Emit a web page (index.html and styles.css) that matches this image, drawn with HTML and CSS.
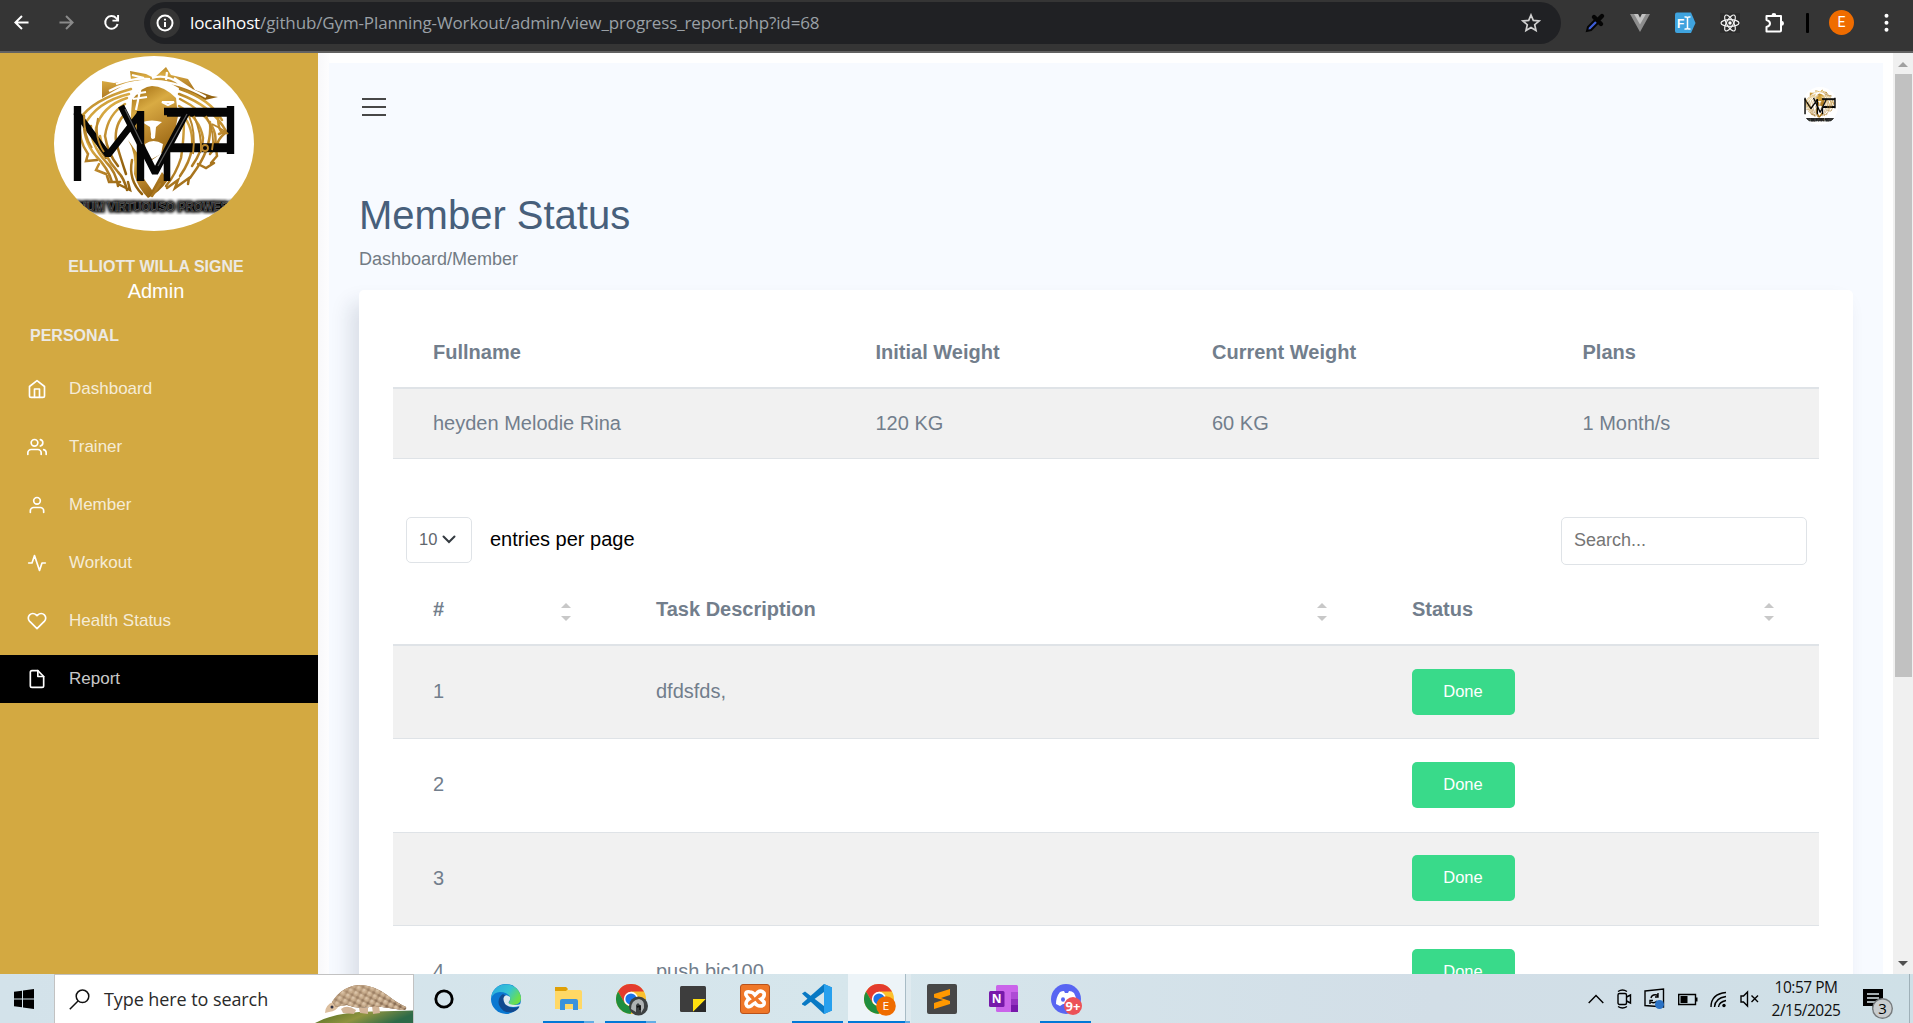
FILE: index.html
```html
<!DOCTYPE html>
<html lang="en">
<head>
<meta charset="utf-8">
<title>Member Status</title>
<link rel="stylesheet" href="styles.css">
</head>
<body>
<svg class="defs" width="0" height="0">
  <defs>
    <linearGradient id="gold" x1="0.2" y1="0" x2="0.6" y2="1">
      <stop offset="0" stop-color="#a87418"/><stop offset=".3" stop-color="#d9ab43"/><stop offset=".65" stop-color="#b8842a"/><stop offset="1" stop-color="#94620f"/>
    </linearGradient>
    <linearGradient id="hill" x1="0" y1="0" x2="1" y2=".3"><stop offset="0" stop-color="#4d6a1e"/><stop offset=".55" stop-color="#8f9440"/><stop offset="1" stop-color="#2c6a48"/></linearGradient>
    <linearGradient id="edgeTop" x1="0" y1="0" x2="1" y2=".5"><stop offset="0" stop-color="#2aa7e0"/><stop offset=".6" stop-color="#35c4d4"/><stop offset="1" stop-color="#6be04c"/></linearGradient>
    <linearGradient id="hide" x1="0" y1="0" x2="1" y2="1"><stop offset="0" stop-color="#b59778"/><stop offset="1" stop-color="#7d624b"/></linearGradient>
    <pattern id="scales" width="6" height="6" patternUnits="userSpaceOnUse" patternTransform="rotate(28)"><circle cx="3" cy="3" r="2.800" fill="#c9ad8d"/><circle cx="2.400" cy="2.400" r="1.300" fill="#dcc5aa"/></pattern>
    <filter id="soft"><feGaussianBlur stdDeviation="1.500"/></filter>
    <symbol id="lion" viewBox="0 0 200 175" preserveAspectRatio="none">
      <rect width="200" height="175" fill="#fff"/>
      <g fill="url(#gold)">
        <path d="M78 44 Q88 30 98 30 Q110 30 122 42 L124 60 L120 80 L112 94 L98 104 L86 92 L76 74Z"/>
        <path d="M48 42L48 25L60 27L77 24L76 15L92 18L100 22L112 11L117 19L134 23L141 34L158 40L164 41L151 44L132 36L112 25L92 23L72 28L58 36Z"/>
        <path d="M74 84Q82 96 80 118Q84 132 94 142Q106 136 114 124L108 116L98 134L88 120L84 98Z"/>
      </g>
      <g fill="none" stroke="#fff" stroke-width="2.200">
        <path d="M55 35Q78 23 97 25.500Q122 24 152 41M62 28Q82 21 96 23M98 22Q112 17 128 29M80 38L92 36M79 43L93 41M87 30L82 54M108 46L120 46L114 49ZM78 19L90 22M113 16L112 24M120 22L138 34"/>
      </g>
      <g fill="none" stroke="url(#gold)" stroke-width="2.500" stroke-linecap="round">
        <path d="M77 33Q38 44 26 63M75 38Q42 46 30 70M73 42Q48 50 42 72Q40 88 52 102M71 48Q54 58 51 80Q54 98 64 110M72 57Q60 68 62 86Q66 100 72 118M26 65Q24 84 34 98L32 105L43 104"/>
        <path d="M30 60Q28 84 42 100Q54 112 58 126M37 70Q36 88 52 106Q62 116 64 130M46 80Q48 98 64 116Q70 122 73 134M45 108L42 114L52 118M53 120L55 126L66 126M64 128L76 134L74 126M78 104Q74 124 88 138"/>
        <path d="M126 33Q156 43 168 64M125 38Q158 50 172 75L165 78M126 43Q148 54 158 70Q166 86 156 98M125 50Q146 62 149 82Q149 94 138 110M128 58Q140 72 138 92Q136 106 126 120M130 62Q130 84 127 102Q122 118 112 130M164 60Q164 80 173 76Q160 84 163 100L157 107M156 66Q158 90 143 112L136 122M113 132L124 124L121 132L135 122L134 128M106 128L98 140M144 108L152 112L160 107"/>
      </g>
      <path d="M88 66Q98 63 108 66L102 71L101 82Q96 85 97 78L96 71Z M91 88Q99 82 109 88L107 98L98 103L92 98Z" fill="#fff"/>
      <g fill="none" stroke="#050505">
        <path d="M23.500 50V125M86.500 55V125M110 55.500H180M176.500 50V98M114 92.500H180" stroke-width="7.400"/>
        <path d="M22 56L54 99L86 58M67 50L101 117L134 54M113 94V125" stroke-width="6.600" stroke-linejoin="bevel"/>
        <path d="M113 58.500H174M118 89.500H174" stroke-width="4.600"/>
      </g>
      <path d="M104 110L133 58M71 53L88 88" stroke="#555" stroke-width="1.300"/>
      <g fill="none" stroke="#b9862b" stroke-width="1.900"><path d="M30 60Q30 80 38 92M44 62Q40 82 50 96M140 60Q148 78 147 96M152 60Q162 78 158 94M158 68Q170 74 174 78M135 60Q142 76 139 98"/><circle cx="151" cy="92" r="3"/></g>
      <text x="20" y="154.500" textLength="162" lengthAdjust="spacingAndGlyphs" class="motto motto-shade" filter="url(#soft)">IMUM VIRTUOUSO PROWESS</text>
      <text x="20" y="154.500" textLength="162" lengthAdjust="spacingAndGlyphs" class="motto">IMUM VIRTUOUSO PROWESS</text>
    </symbol>
    <symbol id="chrome" viewBox="0 0 30 30">
      <circle cx="15" cy="15" r="15" fill="#fbc02d"/>
      <path d="M2 7.500A15 15 0 0 1 28 7.500H15L8.500 18.800Z" fill="#e33b2e"/>
      <path d="M2 7.500L9 19.500Q12 23 18 22L14.500 30A15 15 0 0 1 2 7.500" fill="#1e8e3e"/>
      <circle cx="15" cy="15" r="7.200" fill="#fff"/><circle cx="15" cy="15" r="5.600" fill="#1a73e8"/>
    </symbol>
  </defs>
</svg>

<header class="browser">
  <svg class="nav-btn" viewBox="0 0 16 16"><path d="M15.500 8H1.500M8.500 1L1.500 8L8.500 15"/></svg>
  <svg class="nav-btn dim" viewBox="0 0 16 16"><path d="M.5 8H14.500M7.500 1L14.500 8L7.500 15"/></svg>
  <svg class="nav-btn" viewBox="0 0 16 16"><path d="M14.500 9.500A6.700 6.700 0 1 1 13 3.400L15 5.500M15 0V6H9"/></svg>
  <div class="omnibox">
    <span class="site-info"><svg width="18" height="18" viewBox="0 0 18 18"><circle cx="9" cy="9" r="7.500"/><path d="M9 8V13M9 4.800V6.500"/></svg></span>
    <span class="url"><b>localhost</b>/github/Gym-Planning-Workout/admin/view_progress_report.php?id=68</span>
    <svg class="star" width="20" height="20" viewBox="0 0 20 20"><path d="M10 2L12.300 7.400L18.100 7.900L13.700 11.700L15 17.400L10 14.400L5 17.400L6.300 11.700L1.900 7.900L7.700 7.400Z"/></svg>
  </div>
  <div class="extensions">
    <span><svg width="22" height="22" viewBox="0 0 22 22"><path d="M3 19L4 15L12 7L15 10L7 18Z" fill="#3f5fd8" stroke="#050505" stroke-width="2"/><path d="M10 5L17 12M13.500 8.500L18 4" stroke="#050505" stroke-width="4.400" stroke-linecap="round"/></svg></span>
    <span><svg width="20" height="18" viewBox="0 0 20 18"><path d="M0 0H8L10 4L12 0H20L10 18Z" fill="#8d8d8d"/><path d="M4 0H8L10 4L12 0H16L10 10.500Z" fill="#c2c2c2"/></svg></span>
    <span><svg width="22" height="22" viewBox="0 0 22 22"><path d="M3 .5H17L21.500 11L17 21H3Q1 21 1 19V2.500Q1 .5 3 .5" fill="#3fa3de"/><text x="3" y="16" class="fi">F</text><path d="M10.500 5Q13.500 4.500 13.500 6.500V15.500Q13.500 17.500 10.500 17M16.500 5Q13.500 4.500 13.500 6.500M13.500 15.500Q13.500 17.500 16.500 17" fill="none" stroke="#fff" stroke-width="1.500"/></svg></span>
    <span><svg width="20" height="20" viewBox="0 0 20 20"><rect width="20" height="20" fill="#2c2c2c"/><g fill="none" stroke="#f2f2f2" stroke-width="1.200"><ellipse cx="10" cy="10" rx="9" ry="3.400"/><ellipse cx="10" cy="10" rx="9" ry="3.400" transform="rotate(60 10 10)"/><ellipse cx="10" cy="10" rx="9" ry="3.400" transform="rotate(120 10 10)"/></g><circle cx="10" cy="10" r="1.700" fill="#fff"/></svg></span>
    <span><svg width="22" height="22" viewBox="0 0 22 22"><path d="M2.500 4H17V18.500Q17 19.500 16 19.500H2.500V15Q6 14 6 11.500Q6 9 2.500 8Z" fill="none" stroke="#fff" stroke-width="2" stroke-linejoin="round"/><path d="M7.500 3.500A2.400 2.400 0 0 1 12.300 3.500ZM17.500 8.800A2.500 2.500 0 0 1 17.500 13.800Z" fill="#fff"/></svg></span>
  </div>
  <i class="divider"></i>
  <span class="profile">E</span>
  <svg class="menu-dots" width="5" height="20" viewBox="0 0 5 20"><circle cx="2.500" cy="2.700" r="2"/><circle cx="2.500" cy="9.700" r="2"/><circle cx="2.500" cy="16.700" r="2"/></svg>
</header>

<div class="viewport">
  <aside class="sidebar">
    <svg class="logo" width="200" height="175"><use href="#lion" width="200" height="175"/></svg>
    <div class="user-name">ELLIOTT WILLA SIGNE</div>
    <div class="user-role">Admin</div>
    <div class="nav-title">PERSONAL</div>
    <nav>
      <a><svg viewBox="0 0 24 24"><path d="M3 9l9-7 9 7v11a2 2 0 0 1-2 2H5a2 2 0 0 1-2-2z"/><path d="M9 22V12h6v10"/></svg><span>Dashboard</span></a>
      <a><svg viewBox="0 0 24 24"><path d="M17 21v-2a4 4 0 0 0-4-4H5a4 4 0 0 0-4 4v2"/><circle cx="9" cy="7" r="4"/><path d="M23 21v-2a4 4 0 0 0-3-3.870M16 3.130a4 4 0 0 1 0 7.750"/></svg><span>Trainer</span></a>
      <a><svg viewBox="0 0 24 24"><path d="M20 21v-2a4 4 0 0 0-4-4H8a4 4 0 0 0-4 4v2"/><circle cx="12" cy="7" r="4"/></svg><span>Member</span></a>
      <a><svg viewBox="0 0 24 24"><path d="M22 12h-4l-3 9L9 3l-3 9H2"/></svg><span>Workout</span></a>
      <a><svg viewBox="0 0 24 24"><path d="M20.840 4.610a5.500 5.500 0 0 0-7.780 0L12 5.670l-1.060-1.060a5.500 5.500 0 0 0-7.780 7.780l1.060 1.060L12 21.230l7.780-7.780 1.060-1.060a5.500 5.500 0 0 0 0-7.780z"/></svg><span>Health Status</span></a>
      <a class="active"><svg viewBox="0 0 24 24"><path d="M13 2H6a2 2 0 0 0-2 2v16a2 2 0 0 0 2 2h12a2 2 0 0 0 2-2V9z"/><path d="M13 2v7h7"/></svg><span>Report</span></a>
    </nav>
  </aside>

  <main class="page">
    <div class="content">
      <div class="topbar">
        <div class="burger"><i></i><i></i><i></i></div>
        <svg class="avatar" width="36" height="38" viewBox="8 0 184 175" preserveAspectRatio="none"><use href="#lion" width="200" height="175"/></svg>
      </div>
      <h1>Member Status</h1>
      <div class="crumbs">Dashboard/Member</div>
      <section class="card">
        <table class="summary">
          <colgroup><col style="width:442.500px"><col style="width:336.500px"><col style="width:370.500px"><col></colgroup>
          <thead><tr><th>Fullname</th><th>Initial Weight</th><th>Current Weight</th><th>Plans</th></tr></thead>
          <tbody><tr><td>heyden Melodie Rina</td><td>120 KG</td><td>60 KG</td><td>1 Month/s</td></tr></tbody>
        </table>
        <div class="controls">
          <div class="select">10<svg width="14" height="9" viewBox="0 0 14 9"><path d="M1.500 1.500L7 7L12.500 1.500"/></svg></div>
          <span class="per-page">entries per page</span>
          <div class="search">Search...</div>
        </div>
        <table class="tasks">
          <colgroup><col style="width:223px"><col style="width:756px"><col></colgroup>
          <thead><tr>
            <th><div class="sortable">#<i class="sort"></i></div></th>
            <th><div class="sortable">Task Description<i class="sort"></i></div></th>
            <th><div class="sortable">Status<i class="sort"></i></div></th>
          </tr></thead>
          <tbody>
            <tr><td>1</td><td>dfdsfds,</td><td><span class="btn">Done</span></td></tr>
            <tr><td>2</td><td></td><td><span class="btn">Done</span></td></tr>
            <tr><td>3</td><td></td><td><span class="btn">Done</span></td></tr>
            <tr><td>4</td><td>push bic100</td><td><span class="btn">Done</span></td></tr>
          </tbody>
        </table>
      </section>
    </div>
  </main>
  <div class="scrollbar"><i class="arrow up"></i><i class="thumb"></i><i class="arrow down"></i></div>
</div>

<footer class="taskbar">
  <div class="start"><svg width="20" height="20" viewBox="0 0 20 20"><path d="M0 2.800L8 1.700V9.400H0ZM9 1.500L20 0V9.400H9ZM0 10.400H8V18.200L0 17.200ZM9 10.400H20V20L9 18.400Z"/></svg></div>
  <div class="find">
    <svg width="21" height="21" viewBox="0 0 21 21"><circle cx="13.500" cy="7.300" r="6.300"/><path d="M9 12L.8 20.200"/></svg>
    <span>Type here to search</span>
    <svg class="pangolin" width="98" height="48" viewBox="0 0 98 48">
      <path d="M0 48Q22 36 60 36.500L98 35.500V48Z" fill="url(#hill)"/>
      <path d="M26 34Q32 29 41 35L39 39L28 38ZM44 33H53L53 39L45 38ZM57 31L64 31L65 38L58 39Z" fill="#d3b598"/>
      <path d="M10 38Q10 30 18 27L24 30Q22 36 14 37Z" fill="#dcbf9f"/>
      <path id="shell" d="M17 27Q28 10 46 10Q60 11 72 20Q82 28 91 32Q92 35 88 35Q74 33 60 31Q44 35 32 30Q24 31 21 32Z" fill="url(#hide)"/>
      <use href="#shell"/>
      <path d="M17 27Q28 10 46 10Q60 11 72 20Q82 28 91 32Q92 35 88 35Q74 33 60 31Q44 35 32 30Q24 31 21 32Z" fill="url(#scales)"/>
      <circle cx="17" cy="32" r="1.500" fill="#334"/>
    </svg>
  </div>
  <div class="apps">
    <div class="app"><svg viewBox="0 0 30 30"><circle cx="15" cy="15" r="8.200" fill="none" stroke="#000" stroke-width="2.800"/></svg></div>
    <div class="app"><svg viewBox="0 0 30 30"><circle cx="15" cy="15" r="15" fill="#0b78d1"/><path d="M1 10A15 15 0 0 1 30 14Q30 21 22 21Q18 21 17 19Q20 17 19 13Q16 8 9 8Q3 8 0 14Z" fill="url(#edgeTop)"/><path d="M12 10Q6 14 8 21Q12 30 22 28Q27 26 28.500 22.500Q20 26 15 20Q12 16 15 12Z" fill="#114a8f"/><path d="M19 13Q14 9 12.500 14Q12 20 18 22.500Q23 23.500 28.500 22L30 20Q24 22 18.500 20Q17 19 18 17.500Q19.500 16 19 13" fill="#dce9ef"/></svg></div>
    <div class="app open grouped"><svg viewBox="0 0 30 30"><path d="M2 3H13L15 6H27Q29 6 29 8V25H2Z" fill="#ffd865"/><path d="M2 3H13L15 5L13 7H2Z" fill="#dfa007"/><path d="M7 26V17Q7 15 9 15H23Q25 15 25 17V26H20V20H12V26Z" fill="#3a92dc"/></svg></div>
    <div class="app open grouped"><svg viewBox="0 0 30 30"><use href="#chrome" width="30" height="30"/><circle cx="22.500" cy="22" r="9.500" fill="#3d4142"/><path d="M15 25Q15 16 23 15Q29 16 28 24L25 29V22L22 19L20 21V28Z" fill="#aeb2b3"/><path d="M21 23L24 22V26" stroke="#111" fill="none" stroke-width="1.500"/></svg></div>
    <div class="app"><svg viewBox="0 0 30 30"><rect x="2" y="2" width="26" height="26" rx="1.500" fill="#3d3d3d"/><path d="M15 15H28L15 28Z" fill="#ffdf0f"/><path d="M28 15V28H15Z" fill="#292929"/></svg></div>
    <div class="app"><svg viewBox="0 0 30 30"><rect x=".5" y=".5" width="29" height="29" rx="2.500" fill="#ef7728" stroke="#b9521a"/><path d="M10 8Q5 7 6 11Q7 13 9 15Q6 17 6 20Q7 24 11 22Q13 20 15 19Q17 22 20 22Q25 22 24 18L21 15Q25 13 24 9Q21 6 18 8L15 11Q13 8 10 8Z" fill="none" stroke="#fff" stroke-width="3.600"/></svg></div>
    <div class="app open"><svg viewBox="0 0 30 30"><path d="M22 0L30 3.500V26.500L22 30L2 11.500L0 9.500L3 7.500L22 22Z" fill="#0879c4"/><path d="M22 0V8L3 22L0 20.500V19.500Z" fill="#0879c4"/><path d="M22 0L30 3.500V26.500L22 30Z" fill="#27a0ee"/></svg></div>
    <div class="app open current"><svg viewBox="0 0 30 30"><use href="#chrome" width="30" height="30"/><circle cx="22" cy="22" r="9.800" fill="#ef6c00"/><text x="22" y="26" class="badge-e">E</text></svg></div>
    <div class="app"><svg viewBox="0 0 30 30"><rect width="30" height="30" rx="2" fill="#474747"/><path d="M7 10L23 5V11L14 14L23 17V20L7 25V19L16 16L7 13.500Z" fill="#ff9800"/></svg></div>
    <div class="app"><svg viewBox="0 0 30 30"><rect x="7" y="1" width="22" height="27" rx="1.500" fill="#ca64ea"/><path d="M22 8H29V15H22Z" fill="#ae4bd5"/><path d="M22 15H29V21H22Z" fill="#9332bf"/><path d="M22 21H29V28H22Z" fill="#7719aa"/><rect x="0" y="7" width="15.500" height="16" rx="1.500" fill="#7719aa"/><text x="7.700" y="19" class="badge-n">N</text></svg></div>
    <div class="app open"><svg viewBox="0 0 30 30"><circle cx="15" cy="15" r="15" fill="#5865f2"/><path d="M9 8Q11 7 13 7L14 9H17L18 7Q21 7 23 9Q26 14 26 20L21 22L19 20H12L9 22L5 20Q5 13 9 8Z" fill="#fff"/><ellipse cx="12" cy="15.500" rx="2" ry="2.300" fill="#5865f2"/><circle cx="22" cy="22" r="9" fill="#ec5257"/><text x="22" y="26.500" class="badge-count">9+</text></svg></div>
  </div>
  <div class="tray">
    <svg width="16" height="50" viewBox="0 0 16 50"><path d="M.7 29L8 21.500L15.300 29"/></svg>
    <svg width="15" height="50" viewBox="0 0 15 50"><rect x="1" y="19.500" width="8.500" height="11" rx="1.500"/><path d="M9.500 23L13.500 21V29L9.500 27M1 17.500Q5.500 14.500 10 17.500M1 32.500Q5.500 35.500 10 32.500"/></svg>
    <svg width="21" height="50" viewBox="0 0 21 50"><path d="M1 17L19.500 15V33L1 31.500ZM7 24Q8 20 13 21L14 22.500M14 19V23H11M13 27Q10 30 7 28M6 30V26.500H9"/><circle cx="15.500" cy="30.500" r="4.500" fill="#2b72c4" stroke="none"/></svg>
    <svg width="20" height="50" viewBox="0 0 20 50"><path d="M.7 20.500H17.500V30.500H.7ZM18.800 23.500V27.500"/><rect x="2.500" y="22" width="7" height="7" fill="#000" stroke="none"/></svg>
    <svg width="17" height="50" viewBox="0 0 17 50"><path d="M1 33Q1 20 16 18.500M4.500 33Q5 24 16 22.500M8.500 33Q9 28 16 26.500"/><circle cx="14" cy="31.500" r="1.700" fill="#000" stroke="none"/></svg>
    <svg width="19" height="50" viewBox="0 0 19 50"><path d="M1 22V28H3.500L7.500 32V18L3.500 22ZM11.500 21.500L18 28M18 21.500L11.500 28"/></svg>
    <div class="clock"><span>10:57 PM</span><span class="date">2/15/2025</span></div>
    <svg class="notice" width="32" height="50" viewBox="0 0 32 50"><path d="M0 15H20V32H13L9.500 36V32H0Z" fill="#000" stroke="none"/><path d="M4 20H16M4 24H16M4 28H12" stroke="#dbe7ec"/><circle cx="19.500" cy="34.500" r="9.800" fill="#c9cdcf" stroke="#777b7d"/><text x="19.500" y="40" class="count">3</text></svg>
    <i class="show-desktop"></i>
  </div>
</footer>
</body>
</html>
```
FILE: styles.css
```css
* { box-sizing: border-box; }
body {
  margin: 0;
  width: 1913px;
  height: 1023px;
  overflow: hidden;
  display: flex;
  flex-direction: column;
  font-family: "Liberation Sans", Arial, sans-serif;
  color: #727e8c;
}
.defs { position: absolute; }
svg { flex: none; display: block; }

/* Browser toolbar */
.browser {
  height: 53px;
  flex: none;
  background: #353535;
  border-bottom: 2px solid #626262;
  display: flex;
  align-items: center;
  padding: 0 0 6px 14px;
}
.nav-btn { width: 15px; height: 15px; margin-right: 30px; fill: none; stroke: #fff; stroke-width: 2.1; overflow: visible; }
.nav-btn.dim { stroke: #8a8a8a; }
.omnibox {
  width: 1417px;
  height: 42px;
  margin-left: -5px;
  border-radius: 21px;
  background: #202124;
  display: flex;
  align-items: center;
  padding: 0 20px 0 6px;
}
.site-info {
  width: 30px; height: 30px;
  border-radius: 50%;
  background: #353535;
  display: flex; align-items: center; justify-content: center;
  fill: none; stroke: #fff; stroke-width: 2;
}
.url { flex: 1; margin-left: 10px; padding-bottom: 0; font: 17px/22px "Open Sans", sans-serif; letter-spacing: -.13px; color: #9aa0a6; white-space: nowrap; }
.url b { font-weight: 400; color: #fff; }
.star { fill: none; stroke: #d0d0d0; stroke-width: 1.700; }
.extensions { display: flex; margin-left: 12px; }
.extensions span { width: 44.800px; display: flex; justify-content: center; align-items: center; }
.fi { font: bold 12px "Liberation Sans", sans-serif; fill: #fff; }
.divider { width: 3px; height: 20px; background: #000; margin-left: 9px; border-radius: 1px; }
.profile { width: 25px; height: 25px; margin-left: 20px; border-radius: 50%; background: #ef6c00; color: #fff; font: 14px/25px Roboto, sans-serif; text-align: center; }
.menu-dots { fill: #fff; margin-left: 30px; }

/* Page */
.viewport { height: 921px; flex: none; display: flex; overflow: hidden; background: #fff; }
.sidebar { width: 318px; flex: none; background: #d3a941; color: #ece9e4; padding-top: 3px; }
.logo { margin-left: 54px; border-radius: 50%; }
.motto { font: bold 12px "Liberation Sans", sans-serif; fill: #222; stroke: #777; stroke-width: .5; }
.motto-shade { fill: #000; stroke: #000; stroke-width: 3.600; }
.user-name { margin: 25px 0 0 -6px; text-align: center; font-weight: 700; font-size: 16px; line-height: 22px; }
.user-role { margin: -1px 0 0 -6px; text-align: center; color: #fff; font-size: 20px; line-height: 28px; }
.nav-title { margin: 20px 0 0 30px; font-weight: 700; font-size: 16px; line-height: 22px; }
nav { margin-top: 18px; display: flex; flex-direction: column; gap: 10px; }
nav a { height: 48px; padding-left: 26.500px; display: flex; align-items: center; gap: 22.500px; font-size: 17px; }
nav a svg { width: 20px; height: 20px; fill: none; stroke: #fff; stroke-width: 2; stroke-linecap: round; stroke-linejoin: round; }
nav a span { color: rgba(255, 255, 255, .8); }
nav a.active { background: #000; }

.page { width: 1575px; flex: none; padding: 10px 10px 0 11px; background: linear-gradient(90deg, #f8f8fa, #fdfdfe 11px, #fff 12px); }
.content { height: 911px; background: #f7faff; padding: 0 30px; overflow: hidden; }
.topbar { height: 86px; display: flex; align-items: center; justify-content: space-between; padding: 0 15px 0 3px; }
.burger { display: flex; flex-direction: column; gap: 6px; padding-top: 1px; }
.burger i { width: 24px; height: 2px; background: #474747; }
.avatar { border-radius: 50%; }
h1 { margin: 43px 0 0; font-size: 40px; line-height: 46px; font-weight: 400; color: #475f7b; }
.crumbs { margin-top: 9px; font-size: 18px; line-height: 24px; color: #727b84; }
.card { margin-top: 19px; width: 1494px; height: 900px; background: #fff; border-radius: 5px; padding: 27px 34px 0; box-shadow: -9px 13px 20px rgba(25, 42, 70, .13); }
table { width: 1426px; table-layout: fixed; border-collapse: separate; border-spacing: 0; font-size: 20px; line-height: 24px; }
th, td { text-align: left; padding: 0 0 0 40px; }
th { height: 72px; border-bottom: 2px solid #dfe3e7; font-weight: 700; }
td { border-bottom: 1px solid #dfe3e7; }
.summary td { height: 70px; padding-bottom: 2px; }
tbody tr:nth-child(odd) { background: #f1f1f1; }
.controls { display: flex; align-items: flex-start; margin-top: 58px; padding: 0 12px 0 13px; height: 57px; }
.select { width: 66px; height: 46px; border: 1px solid #dfe3e7; border-radius: 5px; display: flex; align-items: center; gap: 5px; padding: 0 0 1px 12px; font-size: 16.500px; color: #5f666d; }
.select svg { fill: none; stroke: #343a40; stroke-width: 2; stroke-linecap: round; }
.per-page { margin-left: 18px; font-size: 20px; line-height: 44px; color: #000; }
.search { width: 246px; height: 48px; margin-left: auto; border: 1px solid #dfe3e7; border-radius: 5px; padding-left: 12px; font-size: 18px; line-height: 44px; color: #757575; }
.sortable { display: flex; align-items: center; justify-content: space-between; padding-right: 45px; }
.sort { width: 10px; height: 18px; margin-top: 6px; display: flex; flex-direction: column; justify-content: space-between; }
.sort::before, .sort::after { content: ""; border: 5px solid transparent; border-top: 0; border-bottom-color: #c8c8c8; }
.sort::after { border-top: 5px solid #c8c8c8; border-bottom: 0; }
.tasks td { height: 93.300px; padding-bottom: 2px; }
.tasks td:last-child { padding-bottom: 1px; }
.btn { display: block; width: 103px; height: 46px; border-radius: 5px; background: #39da8a; color: #fff; font-size: 16.500px; line-height: 45px; text-align: center; padding-right: 1px; }

.scrollbar { width: 20px; flex: none; background: #f0f0f0; display: flex; flex-direction: column; align-items: center; padding: 9px 0 8px; }
.scrollbar .arrow { border: 5px solid transparent; }
.arrow.up { border-top: 0; border-bottom-color: #a0a0a0; }
.arrow.down { border-bottom: 0; border-top-color: #505050; margin-top: auto; }
.thumb { width: 17px; height: 603px; margin-top: 7px; background: #c1c1c1; }

/* Desktop taskbar */
.taskbar { height: 49px; flex: none; display: flex; background: linear-gradient(90deg, #d3e2ea, #d6e6ec 45%, #d2dee7 75%, #cfe0e7); }
.start { width: 54px; display: flex; align-items: center; padding-left: 14px; }
.find { width: 360px; height: 49px; background: #fff; border: 1px solid #c2c2c2; border-bottom: 0; display: flex; align-items: center; padding-left: 14px; overflow: hidden; }
.find svg { fill: none; stroke: #111; stroke-width: 1.500; }
.find .pangolin { stroke: none; margin-left: auto; }
.find span { margin-left: 14px; font: 18px/24px "Open Sans", sans-serif; letter-spacing: -.08px; color: #2a2a2a; white-space: nowrap; }
.apps { display: flex; margin-left: -1px; }
.app { width: 62.200px; flex: none; height: 49px; display: flex; flex-direction: column; align-items: center; padding-top: 10px; justify-content: space-between; }
.app svg { width: 30px; height: 30px; overflow: visible; }
.open::after { content: ""; width: 51px; height: 2px; background: #0078d7; }
.grouped::after { background: linear-gradient(90deg, #0078d7 41px, #62aee6 41px); }
.current { background: linear-gradient(90deg, #edf4f8 57px, #a8bcc6 57px, #a8bcc6 58px, #dfeaef 58px); }
.current::after { width: 62px; background: linear-gradient(90deg, #0078d7 57px, #62aee6 57px); }
.badge-e, .badge-n, .badge-count { text-anchor: middle; fill: #fff; font: 11px Roboto, sans-serif; }
.badge-n { font: bold 12px "Open Sans", sans-serif; }
.badge-count { font: bold 13px "Open Sans", sans-serif; }
.tray { display: flex; margin-left: auto; padding-right: 3px; }
.tray svg { fill: none; stroke: #000; stroke-width: 1.400; margin-right: 12.500px; overflow: visible; }
.clock { width: 76px; display: flex; flex-direction: column; align-items: center; font: 15.500px/23px "Open Sans", sans-serif; letter-spacing: -.5px; color: #111; padding-top: 2px; margin: 0 19px 0 -3px; white-space: nowrap; }
.tray .notice { margin-right: 0; }
.count { font: 15px "Open Sans", sans-serif; fill: #000; stroke: none; text-anchor: middle; }
.show-desktop { width: 1px; background: #9fb0b8; margin-left: 14px; }
```
